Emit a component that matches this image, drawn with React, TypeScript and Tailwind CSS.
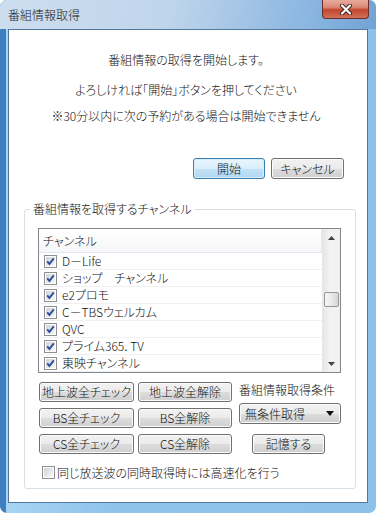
const channels = [
  "D－Life",
  "ショップ　チャンネル",
  "e2プロモ",
  "C－TBSウェルカム",
  "QVC",
  "プライム365．TV",
  "東映チャンネル",
];

function CheckBox({ checked }: { checked: boolean }) {
  return (
    <svg width="13" height="13" viewBox="0 0 13 13" className="shrink-0">
      <defs>
        <linearGradient id="cbg" x1="0" y1="0" x2="1" y2="1">
          <stop offset="0" stopColor="#cfd3d8" />
          <stop offset="1" stopColor="#f7f7f7" />
        </linearGradient>
      </defs>
      <rect x="0.5" y="0.5" width="12" height="12" fill="#ffffff" stroke="#8e8f8f" />
      <rect x="2" y="2" width="9" height="9" fill="url(#cbg)" />
      {checked && (
        <path d="M3.2 6.4 L5.4 8.9 L9.8 3.4" fill="none" stroke="#2d4f9a" strokeWidth="1.9" />
      )}
    </svg>
  );
}

const face =
  "rounded-[3px] border border-[#707070] bg-[linear-gradient(180deg,#f2f2f2_0%,#ebebeb_50%,#dddddd_51%,#cfcfcf_100%)] shadow-[inset_0_0_0_1px_#fbfbfb] text-[12px] leading-none text-[#111] flex items-center";
const btn = face + " h-[20px] justify-center";

export default function App() {
  return (
    <div className="w-[376px] h-[513px] flex flex-col overflow-hidden rounded-[7px] bg-[linear-gradient(90deg,#3f7fc0_0px,#3f7fc0_6px,#a8d4f3_6px,#8fc3ea_30%,#8cc2ea_100%)] font-['Noto_Sans_CJK_JP','Liberation_Sans',sans-serif] font-light [font-feature-settings:'palt'] text-[#111]">
      {/* Title bar */}
      <div className="h-[29px] shrink-0 flex items-start justify-between bg-[linear-gradient(100deg,#cddeef_0%,#bfd5eb_45%,#86b3df_85%,#72a2d4_100%)]">
        <div className="pl-[8px] pt-[7px] text-[12px] leading-[16px] text-[#1a1a1a]">番組情報取得</div>
        <div className="mr-[7px] w-[47px] h-[19px] rounded-b-[4px] border border-t-0 border-[#6b2f2a] bg-[linear-gradient(180deg,#e9ab9c_0%,#d98a78_40%,#c5452f_55%,#d0715a_100%)] flex items-center justify-center">
          <svg width="14" height="11" viewBox="0 0 14 11">
            <path d="M3 1.5 L11 9.5 M11 1.5 L3 9.5" stroke="#3c1f1c" strokeWidth="4" strokeLinecap="round" />
            <path d="M3 1.5 L11 9.5 M11 1.5 L3 9.5" stroke="#ffffff" strokeWidth="2.2" strokeLinecap="round" />
          </svg>
        </div>
      </div>

      {/* Client area */}
      <div className="mx-[8px] h-[474px] shrink-0 bg-white border border-[#54779c] flex flex-col text-[12px] leading-[16px]">
        <div className="flex flex-col items-center pr-[4px]">
          <p className="mt-[22px]">番組情報の取得を開始します。</p>
          <p className="mt-[14px]">よろしければ「開始」ボタンを押してください</p>
          <p className="mt-[10px]">※30分以内に次の予約がある場合は開始できません</p>
        </div>

        <div className="mt-[34px] flex justify-end gap-[6px] pr-[23px]">
          <button className="w-[72px] h-[21px] rounded-[3px] border border-[#3c7fb1] bg-[linear-gradient(180deg,#eaf6fd_0%,#d9eefb_50%,#c3e3f7_51%,#b0d6ef_100%)] shadow-[inset_0_0_0_1px_#d6eefc] text-[12px] leading-none flex items-center justify-center">
            開始
          </button>
          <button className={face + " w-[73px] h-[21px] justify-center"}>キャンセル</button>
        </div>

        {/* Group box */}
        <div className="relative mt-[30px] ml-[15px] w-[332px] rounded-[3px] border border-[#d5dfe5] pt-[18px] pl-[13px] pr-[14px] pb-[9px]">
          <span className="absolute left-[5px] top-[-9px] bg-white px-[3px] leading-[16px]">番組情報を取得するチャンネル</span>

          {/* List view */}
          <div className="h-[145px] border border-[#828790] flex overflow-hidden">
            <div className="flex-1 flex flex-col">
              <div className="h-[24px] shrink-0 flex items-center pl-[4px] border-b border-r border-[#e3e6ea] bg-[linear-gradient(180deg,#ffffff,#f6f7f8)]">
                チャンネル
              </div>
              {channels.map((c) => (
                <div key={c} className="h-[17px] shrink-0 flex items-center pl-[5px] border-b border-[#f0f0f0]">
                  <CheckBox checked />
                  <span className="ml-[5px] whitespace-pre">{c}</span>
                </div>
              ))}
            </div>
            <div className="w-[18px] shrink-0 flex flex-col bg-[linear-gradient(90deg,#e6e6e6,#f3f3f3_40%,#f0f0f0)] border-l border-[#e8e8e8]">
              <div className="h-[17px] flex items-center justify-center">
                <svg width="7" height="4" viewBox="0 0 7 4"><path d="M3.5 0 L7 4 L0 4 Z" fill="#404040" /></svg>
              </div>
              <div className="flex-1">
                <div className="mt-[46px] ml-[1px] w-[15px] h-[15px] rounded-[2px] border border-[#979797] bg-[linear-gradient(90deg,#f6f6f6,#e9e9e9_50%,#d6d6d6)]" />
              </div>
              <div className="h-[17px] flex items-center justify-center">
                <svg width="7" height="4" viewBox="0 0 7 4"><path d="M0 0 L7 0 L3.5 4 Z" fill="#404040" /></svg>
              </div>
            </div>
          </div>

          {/* Buttons */}
          <div className="mt-[9px] pl-[1px] flex">
            <div className="grid grid-cols-[95px_94px] gap-x-[4px] gap-y-[6px]">
              <button className={btn}>地上波全チェック</button>
              <button className={btn}>地上波全解除</button>
              <button className={btn}>BS全チェック</button>
              <button className={btn}>BS全解除</button>
              <button className={btn}>CS全チェック</button>
              <button className={btn}>CS全解除</button>
            </div>
            <div className="ml-[7px] w-[102px] flex flex-col">
              <div className="h-[16px] leading-[16px]">番組情報取得条件</div>
              <div className={face + " mt-[5px] h-[21px] justify-between pl-[5px] pr-[6px]"}>
                <span>無条件取得</span>
                <svg width="8" height="5" viewBox="0 0 8 5"><path d="M0 0 L8 0 L4 5 Z" fill="#111" /></svg>
              </div>
              <button className={btn + " mt-[10px] ml-[13px] w-[73px]"}>記憶する</button>
            </div>
          </div>

          <div className="mt-[12px] ml-[4px] flex items-center h-[13px]">
            <CheckBox checked={false} />
            <span className="ml-[2px] leading-[16px]">同じ放送波の同時取得時には高速化を行う</span>
          </div>
        </div>
      </div>
    </div>
  );
}
